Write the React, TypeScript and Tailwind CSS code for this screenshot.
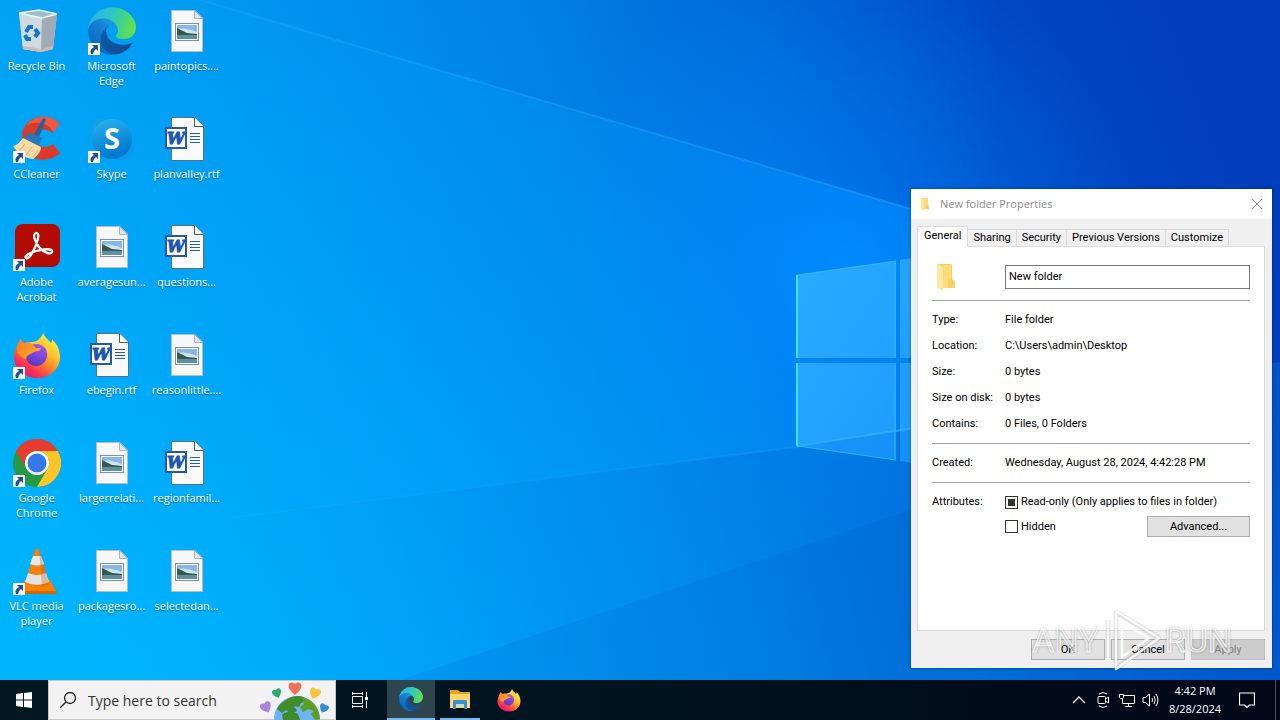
import { ReactNode } from "react";

const Wallpaper = () => {
  return (
    <svg
      className="absolute inset-0 w-full h-full"
      viewBox="0 0 1280 680"
      preserveAspectRatio="none"
      aria-hidden="true"
    >
      <defs>
        <linearGradient id="sky" x1="0" y1="0.6" x2="1" y2="0.4">
          <stop offset="0" stopColor="#00b6ff" />
          <stop offset="0.25" stopColor="#00a8fc" />
          <stop offset="0.5" stopColor="#0092f0" />
          <stop offset="0.68" stopColor="#0076e2" />
          <stop offset="0.85" stopColor="#004fce" />
          <stop offset="1" stopColor="#023cba" />
        </linearGradient>
        <radialGradient id="glow" gradientUnits="userSpaceOnUse" cx="850" cy="260" r="300">
          <stop offset="0" stopColor="#008aff" stopOpacity="0.95" />
          <stop offset="0.5" stopColor="#008cff" stopOpacity="0.5" />
          <stop offset="1" stopColor="#0090ff" stopOpacity="0" />
        </radialGradient>
        <linearGradient id="shade" x1="0" y1="0" x2="0.3" y2="1">
          <stop offset="0" stopColor="#003cae" stopOpacity="0.12" />
          <stop offset="1" stopColor="#003cae" stopOpacity="0" />
        </linearGradient>
        <linearGradient id="upper" gradientUnits="userSpaceOnUse" x1="200" y1="0" x2="1000" y2="0">
          <stop offset="0" stopColor="#0055c8" stopOpacity="0" />
          <stop offset="0.7" stopColor="#0050c8" stopOpacity="0.22" />
          <stop offset="1" stopColor="#0040bc" stopOpacity="0.45" />
        </linearGradient>
        <linearGradient id="lower" gradientUnits="userSpaceOnUse" x1="200" y1="0" x2="911" y2="0">
          <stop offset="0" stopColor="#0090e8" stopOpacity="0" />
          <stop offset="1" stopColor="#006ad4" stopOpacity="0.5" />
        </linearGradient>
        <linearGradient id="beam" gradientUnits="userSpaceOnUse" x1="200" y1="0" x2="911" y2="0">
          <stop offset="0" stopColor="#35b8ff" stopOpacity="0.2" />
          <stop offset="1" stopColor="#30a8ff" stopOpacity="0.4" />
        </linearGradient>
        <linearGradient id="pane" x1="0" y1="0" x2="1" y2="1">
          <stop offset="0" stopColor="#2aacff" />
          <stop offset="1" stopColor="#1c98ff" />
        </linearGradient>
      </defs>
      <rect width="1280" height="680" fill="url(#sky)" />
      <rect width="1280" height="680" fill="url(#shade)" />
      <rect width="1280" height="680" fill="url(#glow)" />
      <path d="M200 0L911 209L1280 317V0Z" fill="url(#upper)" />
      <path d="M0 545L797 447L1280 362V680H0Z" fill="url(#lower)" />
      <path d="M400 680L911 510L1280 390V680Z" fill="#004cc0" opacity="0.12" />
      <path d="M200 0L911 209" stroke="url(#beam)" strokeWidth="2" fill="none" />
      <path d="M230 518L797 447L911 429" stroke="url(#beam)" strokeWidth="2" opacity="0.6" fill="none" />
      <path d="M797 275L896 261V358H797ZM900 260L940 254V358H900ZM797 363H896V460L797 446ZM900 363H940V467L900 461Z" fill="url(#pane)" />
      <path d="M797 446L940 424V467Z" fill="#0078e4" opacity="0.3" />
      <path d="M797 446L940 424" stroke="#35b4ff" strokeWidth="2" opacity="0.7" />
      <path d="M797 275V358M797 363V446" stroke="#42e0ff" strokeWidth="2" />
      <path d="M797 275L896 261M797 446L896 460M895 262V358M895 363V459" stroke="#43beff" opacity="0.7" fill="none" />
    </svg>
  );
};

const EdgeLogo = ({ className }: { className: string }) => {
  return (
    <svg className={className} viewBox="4 4 257 257" aria-hidden="true">
      <defs>
        <linearGradient id="edgeA" x1="0.1" y1="0.5" x2="1" y2="0.6">
          <stop offset="0" stopColor="#0c59a4" />
          <stop offset="1" stopColor="#114a8b" />
        </linearGradient>
        <linearGradient id="edgeB" x1="0.9" y1="0.2" x2="0.3" y2="0.9">
          <stop offset="0" stopColor="#1b9de2" />
          <stop offset="0.4" stopColor="#1680d8" />
          <stop offset="1" stopColor="#0669bf" />
        </linearGradient>
        <linearGradient id="edgeC" x1="0" y1="0.3" x2="1" y2="0.5">
          <stop offset="0" stopColor="#2fafe0" />
          <stop offset="0.4" stopColor="#2bc3cf" />
          <stop offset="0.75" stopColor="#45d680" />
          <stop offset="1" stopColor="#66e04b" />
        </linearGradient>
      </defs>
      <path fill="url(#edgeA)" d="M235.68 195.46a93.73 93.73 0 0 1-10.54 4.71 101.87 101.87 0 0 1-35.9 6.46c-47.32 0-88.54-32.55-88.54-74.32A31.48 31.48 0 0 1 117.13 105c-42.8 1.8-53.8 46.4-53.8 72.53 0 73.88 68.09 81.37 82.76 81.37 7.91 0 19.84-2.3 27-4.56l1.31-.44A128.34 128.34 0 0 0 241.05 201a4 4 0 0 0-5.37-5.54Z" />
      <path fill="url(#edgeB)" d="M110.34 246.34A79.2 79.2 0 0 1 87.6 225a80.72 80.72 0 0 1 29.53-120c3.12-1.47 8.45-4.13 15.54-4a32.35 32.35 0 0 1 25.69 13 31.88 31.88 0 0 1 6.36 18.66c0-.21 24.46-79.6-80-79.6-43.9 0-80 41.66-80 78.21a130.15 130.15 0 0 0 12.11 56 128 128 0 0 0 156.38 67.11 75.55 75.55 0 0 1-62.78-8Z" />
      <path fill="url(#edgeC)" d="M156.94 153.78c-.81 1.05-3.3 2.5-3.3 5.66 0 2.61 1.7 5.12 4.72 7.23 14.38 10 41.49 8.68 41.56 8.68a59.56 59.56 0 0 0 30.27-8.35A61.38 61.38 0 0 0 260.62 114c.26-22.41-8-37.31-11.34-43.91C228.09 28.76 182.35 4.92 132.62 4.92a128 128 0 0 0-128 126.2c.48-36.54 36.8-66.05 80-66.05 3.5 0 23.46.34 42 10.07 16.34 8.58 24.9 18.94 30.85 29.21 6.18 10.67 7.28 24.15 7.28 29.52s-2.75 13.33-7.81 19.91Z" />
    </svg>
  );
};

const FirefoxLogo = ({ className }: { className: string }) => {
  return (
    <svg className={className} viewBox="0 0 48 48" aria-hidden="true">
      <defs>
        <linearGradient id="ffA" x1="0.85" y1="0.1" x2="0.25" y2="0.95">
          <stop offset="0" stopColor="#fff044" />
          <stop offset="0.35" stopColor="#ffc12e" />
          <stop offset="0.6" stopColor="#ff7a26" />
          <stop offset="0.8" stopColor="#ff3750" />
          <stop offset="1" stopColor="#e41c74" />
        </linearGradient>
        <linearGradient id="ffB" x1="0.7" y1="0" x2="0.3" y2="1">
          <stop offset="0" stopColor="#a555f0" />
          <stop offset="1" stopColor="#5436c0" />
        </linearGradient>
        <linearGradient id="ffC" x1="0" y1="0" x2="1" y2="1">
          <stop offset="0" stopColor="#ff7a1f" />
          <stop offset="1" stopColor="#ffae2e" />
        </linearGradient>
      </defs>
      <path fill="url(#ffA)" d="M30 1c1 5 5 7 8 11 1-1 1-3 1-4 5 5 8 11 8 18 0 12-10 21-23 21S1 38 1 26c0-6 2-9 4-12 0-2 1-4 3-6 0 2 1 3 3 4 3-1 6-1 9-1 2-1 5-1 6-3 2-2 4-4 4-7Z" />
      <path fill="url(#ffB)" d="M16 16c4-4 12-4 16 1 5 7 1 17-8 18-7 0-12-5-11-11Z" />
      <path fill="url(#ffC)" d="M4 16c0-3 2-6 4-8 0 3 2 4 4 4 5-1 8 1 11 5h5c0 4-7 3-9 5s-5 1-6 6c-5-2-9-4-9-12Z" />
    </svg>
  );
};

const RecycleBin = () => {
  return (
    <svg className="w-12 h-12" viewBox="0 0 48 48" aria-hidden="true">
      <path d="M6 6L26 3L44 7L40 42L28 45L10 42Z" fill="#c3cdd6" />
      <path d="M6 6L29 11L28 45L10 42Z" fill="#cfdae2" />
      <path d="M29 11L44 7L40 42L28 45Z" fill="#a1abb5" />
      <path d="M6 6L26 3L44 7L29 11Z" fill="#9dbccb" stroke="#eaf5fb" strokeWidth="1.5" />
      <path d="M10 39L28 42L40 39L40 42L28 45L10 42Z" fill="#d5b8ad" />
      <g fill="none" stroke="#1476c9" strokeWidth="4">
        <path d="M13 25L16 20H20" />
        <path d="M22 22L25 26L22 30" />
        <path d="M18 32H14L12 28" />
      </g>
    </svg>
  );
};

const CCleaner = () => {
  return (
    <svg className="w-12 h-12" viewBox="0 0 48 48" aria-hidden="true">
      <path d="M47 9C36-4 9 0 9 23c0 20 23 29 38 15l-7-9c-8 6-17 3-17-6s10-11 16-5Z" fill="#d93a2a" />
      <path d="M47 9C37-2 20 0 13 11c8-5 22-5 27 6Z" fill="#ee5a40" />
      <path d="M30 3l3 1-8 21-5-3Z" fill="#2a5f9a" />
      <path d="M17 18l12 5-3 8-14-6c0-4 2-7 5-7Z" fill="#2878b7" />
      <path d="M10 23l18 9c0 5-4 9-8 12C12 43 5 39 0 31c4-1 7-4 10-8Z" fill="#f6dba6" />
      <path d="M12 29l-5 6m12-3l-6 8m12-5l-5 7" stroke="#dcb272" fill="none" />
    </svg>
  );
};

const Skype = () => {
  return (
    <svg className="w-12 h-12" viewBox="0 0 48 48" aria-hidden="true">
      <defs>
        <linearGradient id="skA" x1="0" y1="0" x2="0.3" y2="1">
          <stop offset="0" stopColor="#2bb4f0" />
          <stop offset="1" stopColor="#0078d0" />
        </linearGradient>
      </defs>
      <circle cx="15" cy="15" r="12" fill="#159fe5" />
      <circle cx="33" cy="33" r="12" fill="#1097e6" />
      <circle cx="24" cy="24" r="20" fill="url(#skA)" />
      <text x="24" y="34" textAnchor="middle" fill="#fff" fontFamily="Open Sans, sans-serif" fontWeight="700" fontSize="29">
        S
      </text>
    </svg>
  );
};

const Acrobat = () => {
  return (
    <svg className="w-12 h-12" viewBox="0 0 48 48" aria-hidden="true">
      <rect x="2" y="1" width="45" height="43" rx="8" fill="#b30b00" />
      <path
        d="M23 10c-4 1-1 9 3 14 5 6 12 8 13 5 1-4-8-3-16-1-7 2-12 5-10 7 3 2 7-6 10-13 2-6 4-12 0-12Z"
        fill="none"
        stroke="#fff"
        strokeWidth="2.3"
      />
    </svg>
  );
};

const Chrome = () => {
  return (
    <svg className="w-12 h-12" viewBox="0 0 48 48" aria-hidden="true">
      <circle cx="24" cy="24" r="24" fill="#249a47" />
      <path d="M3.2 12A24 24 0 0 1 44.8 12H24A12 12 0 0 0 13.6 30Z" fill="#e83b2d" />
      <path d="M44.8 12A24 24 0 0 1 24 48L34.4 30A12 12 0 0 0 24 12Z" fill="#fcc629" />
      <circle cx="24" cy="24" r="12" fill="#fff" />
      <circle cx="24" cy="24" r="9.5" fill="#3379e8" />
    </svg>
  );
};

const Vlc = () => {
  return (
    <svg className="w-12 h-12" viewBox="0 0 48 48" aria-hidden="true">
      <path d="M12 33h25l7 13H5Z" fill="#f38300" />
      <path d="M5 44h39v3H5Z" fill="#d56500" />
      <path d="M22 3q2-3 4 0l10 34q-12 8-24 0Z" fill="#f57f0a" />
      <path d="M20 9h8l3 8q-7 3-14 0Z" fill="#e8e8e8" />
      <path d="M15 26q9 4 18 0l3 9q-12 6-24 0Z" fill="#e3e3e3" />
      <path d="M26 2l10 35q-3 3-7 3Z" fill="#c85500" opacity="0.3" />
    </svg>
  );
};

const ImageFile = () => {
  return (
    <svg className="w-12 h-12" viewBox="0 0 48 48" aria-hidden="true">
      <path d="M8.500 3.500H32L39.500 11V44.500H8.500Z" fill="#f7f7f7" stroke="#b9bec3" />
      <path d="M31.500 3.500V11.500H39.500Z" fill="#dfe6ec" stroke="#a5b4c0" />
      <rect x="12.500" y="16.500" width="23" height="17" fill="#fff" stroke="#7693aa" />
      <path d="M14 18h20v14H14Z" fill="#87b6e8" />
      <path d="M14 22q8-2 20 3v4H14Z" fill="#cfe4ee" />
      <path d="M14 21l6 3 4 2 10 1v2H14Z" fill="#365a4a" />
      <path d="M14 28h20v4H14Z" fill="#5f8fa5" />
    </svg>
  );
};

const WordFile = () => {
  return (
    <svg className="w-12 h-12" viewBox="0 0 48 48" aria-hidden="true">
      <path d="M8.500 2.500H32L40.500 11V45.500H8.500Z" fill="#fafafa" stroke="#587087" />
      <path d="M31.500 2.500V11.500H40.500" fill="#fff" stroke="#445866" />
      <path d="M27 18.500h10M27 21.500h10M27 24.500h10M27 27.500h10" stroke="#1f5fbb" />
      <rect x="3" y="13" width="20" height="20" fill="#fff" stroke="#2159b5" strokeWidth="2" />
      <text x="13" y="29" textAnchor="middle" fill="#2055b0" stroke="#2055b0" fontFamily="DejaVu Serif, serif" fontStyle="italic" fontWeight="700" fontSize="16">
        W
      </text>
    </svg>
  );
};

const ShortcutArrow = () => {
  return (
    <svg className="absolute left-0 bottom-0 w-3 h-3" viewBox="0 0 12 12" aria-hidden="true">
      <rect width="12" height="12" fill="#f8f8f8" />
      <path d="M4 2h6v6L8 6Q5 8 5 11H3Q1 7 6 4Z" fill="#1f4f91" />
    </svg>
  );
};

type Item = { label: string; icon: ReactNode; shortcut?: boolean };

const items: Item[] = [
  { label: "Recycle Bin", icon: <RecycleBin /> },
  { label: "CCleaner", icon: <CCleaner />, shortcut: true },
  { label: "Adobe Acrobat", icon: <Acrobat />, shortcut: true },
  { label: "Firefox", icon: <FirefoxLogo className="w-12 h-12" />, shortcut: true },
  { label: "Google Chrome", icon: <Chrome />, shortcut: true },
  { label: "VLC media player", icon: <Vlc />, shortcut: true },
  { label: "Microsoft Edge", icon: <EdgeLogo className="w-12 h-12" />, shortcut: true },
  { label: "Skype", icon: <Skype />, shortcut: true },
  { label: "averagesun...", icon: <ImageFile /> },
  { label: "ebegin.rtf", icon: <WordFile /> },
  { label: "largerrelati...", icon: <ImageFile /> },
  { label: "packagesro...", icon: <ImageFile /> },
  { label: "paintopics....", icon: <ImageFile /> },
  { label: "planvalley.rtf", icon: <WordFile /> },
  { label: "questions...", icon: <WordFile /> },
  { label: "reasonlittle....", icon: <ImageFile /> },
  { label: "regionfamil...", icon: <WordFile /> },
  { label: "selectedan...", icon: <ImageFile /> },
];

const DesktopIcons = () => {
  return (
    <div className="relative grid grid-flow-col grid-rows-[repeat(6,108px)] auto-cols-[75px] w-max pt-[7px]">
      {items.map((item) => (
        <button key={item.label} className="flex flex-col items-center justify-start pr-0.5">
          <span className="relative block">
            {item.icon}
            {item.shortcut && <ShortcutArrow />}
          </span>
          <span className="mt-[3px] px-1 text-[11px] leading-[15px] text-white [text-shadow:0_1px_1px_#0007]">
            {item.label}
          </span>
        </button>
      ))}
    </div>
  );
};

const FolderIcon = ({ className }: { className: string }) => {
  return (
    <svg className={className} viewBox="0 0 20 30" aria-hidden="true">
      <path d="M1 2h14q1 0 1 1v14l3 2v7H6Z" fill="#f6d065" />
      <path d="M8 3h7v14l-3 1v8H7Z" fill="#ffdc78" />
      <path d="M1 2l6 3v24l-6-3Z" fill="#ffe9a2" />
    </svg>
  );
};

const tabs = ["General", "Sharing", "Security", "Previous Versions", "Customize"];

const details = [
  ["Type:", "File folder"],
  ["Location:", "C:\\Users\\admin\\Desktop"],
  ["Size:", "0 bytes"],
  ["Size on disk:", "0 bytes"],
  ["Contains:", "0 Files, 0 Folders"],
];

const Row = ({ name, value }: { name: string; value: string }) => {
  return (
    <div className="flex h-[26px] items-center">
      <dt className="w-[73px]">{name}</dt>
      <dd>{value}</dd>
    </div>
  );
};

const Divider = () => <hr className="my-1.5 border-[#a0a0a0]" />;

const checkboxStyle =
  "appearance-none w-[13px] h-[13px] border border-[#333] bg-white indeterminate:bg-[#333] indeterminate:shadow-[inset_0_0_0_2px_white]";

const buttonStyle = "h-[21px] border border-[#adadad] bg-[#e1e1e1]";

const PropertiesDialog = () => {
  return (
    <section
      aria-label="New folder Properties"
      className="absolute right-2 top-[189px] w-[361px] bg-[#f0f0f0] pb-2 text-[11px] leading-[14px] text-black shadow-[0_0_3px_#0006] font-['Roboto','Liberation_Sans',sans-serif]"
    >
      <header className="flex h-[30px] items-center bg-white px-[7px] text-[#8c8c8c]">
        <FolderIcon className="w-[14px] h-[14px]" />
        <h1 className="ml-2 flex-1 font-['Open_Sans',sans-serif]">New folder Properties</h1>
        <button aria-label="Close" className="flex h-4 w-4 items-center justify-center">
          <svg className="w-3 h-3" viewBox="0 0 12 12" aria-hidden="true">
            <path d="M1 1l10 10M11 1L1 11" stroke="#8c8c8c" />
          </svg>
        </button>
      </header>
      <div className="pl-1.5 pr-[7px] pt-[7px]">
        <div role="tablist" className="flex h-5 items-end">
          {tabs.map((tab, i) => (
            <button
              key={tab}
              role="tab"
              aria-selected={i === 0}
              className={
                i === 0
                  ? "relative -mb-px h-[21px] border border-b-0 border-[#dcdcdc] bg-white px-1.5 pb-0.5"
                  : "h-[17px] border border-l-0 border-b-0 border-[#d9d9d9] px-[5px]"
              }
            >
              {tab}
            </button>
          ))}
        </div>
        <div className="min-h-[385px] border border-[#dcdcdc] bg-white px-[14px]">
          <div className="flex items-center pt-[15px] pb-0.5">
            <FolderIcon className="ml-1 w-5 h-[30px]" />
            <input
              aria-label="Folder name"
              defaultValue="New folder"
              className="ml-[49px] h-6 min-w-0 flex-1 border border-[#7a7a7a] bg-white px-[3px] pb-0.5"
            />
          </div>
          <Divider />
          <dl>
            {details.map(([name, value]) => (
              <Row key={name} name={name} value={value} />
            ))}
          </dl>
          <Divider />
          <dl>
            <Row name="Created:" value="Wednesday, August 28, 2024, 4:42:28 PM" />
          </dl>
          <Divider />
          <div className="flex pt-1.5">
            <span className="w-[73px]">Attributes:</span>
            <div className="flex-1">
              <label className="flex items-center gap-[3px]">
                <input
                  type="checkbox"
                  className={checkboxStyle}
                  ref={(el) => {
                    if (el) el.indeterminate = true;
                  }}
                />
                Read-only (Only applies to files in folder)
              </label>
              <div className="flex items-center justify-between pt-[7px]">
                <label className="flex items-center gap-[3px]">
                  <input type="checkbox" className={checkboxStyle} />
                  Hidden
                </label>
                <button className={`${buttonStyle} w-[103px]`}>Advanced...</button>
              </div>
            </div>
          </div>
        </div>
        <div className="mt-2 flex justify-end gap-1.5">
          <button className={`${buttonStyle} w-[74px]`}>OK</button>
          <button className={`${buttonStyle} w-[74px]`}>Cancel</button>
          <button disabled className="h-[21px] w-[74px] border border-[#bfbfbf] bg-[#cccccc] text-[#838383]">
            Apply
          </button>
        </div>
      </div>
    </section>
  );
};

const Watermark = () => {
  return (
    <div className="pointer-events-none absolute bottom-2 right-12 flex items-center gap-1 text-[34px] leading-none text-white/50 [-webkit-text-stroke:1px_#ffffffdd] [text-shadow:0_0_3px_#0006] font-['Roboto','Liberation_Sans',sans-serif]">
      <span>ANY</span>
      <svg className="w-[58px] h-16" viewBox="0 0 58 64" fill="none" aria-hidden="true">
        <g stroke="#888" strokeOpacity="0.25" strokeWidth="5" strokeLinejoin="round">
          <path d="M13 4L56 30L13 60V4Z" />
          <path d="M5 12V50" />
        </g>
        <g stroke="#fff" strokeOpacity="0.85" strokeWidth="2.500" strokeLinejoin="round">
          <path d="M13 3L56 30L13 61V3Z" />
          <path d="M5 11V51M19 15V49L46 30Z" />
        </g>
      </svg>
      <span>RUN</span>
    </div>
  );
};

const heart = "M0 5C-8-1-4-6 0-3C4-6 8-1 0 5Z";

const SearchArt = () => {
  return (
    <svg className="w-20 h-10" viewBox="-2 0 80 40" aria-hidden="true">
      <circle cx="40" cy="39" r="23" fill="#6fb2f5" />
      <path d="M29 20q8-6 18-3l2 4-5 2-2 4-5-1 3 5-6 3-5-4-4 3-5-4q3-6 9-9Z" fill="#3f8c2c" />
      <path d="M45 17q16 4 18 22l-5 1-4-6 3-3-6-2-5 3-3-5 4-3Z" fill="#5d9e1e" />
      <path d="M25 34q9-5 16 0l2 6H26Z" fill="#3f8c2c" />
      <g>
        <path d={heart} transform="translate(9 27) rotate(-25) scale(1.2)" fill="#a884dc" />
        <path d={heart} transform="translate(20 13) rotate(-20)" fill="#2fa970" />
        <path d={heart} transform="translate(38 8) scale(1.4)" fill="#f06f5a" />
        <path d={heart} transform="translate(58 13) rotate(20) scale(1.2)" fill="#f8c33f" />
        <path d={heart} transform="translate(67 28) rotate(25)" fill="#3590d8" />
      </g>
    </svg>
  );
};

const Explorer = () => {
  return (
    <svg className="w-6 h-6" viewBox="0 0 24 24" aria-hidden="true">
      <path d="M2 3h8l2 2h10v4H2Z" fill="#e8a418" />
      <path d="M2 7h20v14H2Z" fill="#ffd76a" />
      <path d="M5 22v-8q0-1 1-1h12q1 0 1 1v8h-3v-5H8v5Z" fill="#3a91d8" />
      <path d="M8 17h8v2H8Z" fill="#b8dcf5" />
    </svg>
  );
};

const Taskbar = () => {
  return (
    <footer className="flex h-10 bg-gradient-to-r from-[#01161f] via-[#01131f] to-[#010717] text-white">
      <button aria-label="Start" className="flex w-12 items-center justify-center">
        <svg className="w-4 h-4" viewBox="0 0 16 16" fill="#fff" aria-hidden="true">
          <path d="M0 2L7 1V7.500H0ZM8 1L16 0V7.500H8ZM0 8.500H7V15L0 14ZM8 8.500H16V16L8 15Z" />
        </svg>
      </button>
      <label className="flex w-72 items-center border border-[#c8c8c8] bg-[#f2f2f2] pl-[11px] text-[#333]">
        <svg className="w-4 h-4" viewBox="0 0 16 16" fill="none" stroke="#222" aria-hidden="true">
          <circle cx="10" cy="6" r="5.500" strokeWidth="1.300" />
          <path d="M6 10L0 16" strokeWidth="1.300" />
        </svg>
        <input
          aria-label="Search"
          placeholder="Type here to search"
          className="ml-3 min-w-0 flex-1 bg-transparent text-[14px] placeholder:text-[#333]"
        />
        <SearchArt />
      </label>
      <div className="flex gap-px">
        <button aria-label="Task View" className="flex w-12 items-center justify-center">
          <svg className="w-4 h-4" viewBox="0 0 16 16" fill="none" stroke="#eee" aria-hidden="true">
            <path d="M0 1.500H11M.5 0V3M10.500 0V3M.5 4.500H10.500V11.500H.5ZM.5 13V16M10.500 13V16M0 14.500H11M14.500 0V5M14.500 9V16" />
            <path d="M13 5H16V8H13Z" fill="#fff" stroke="none" />
          </svg>
        </button>
        <button aria-label="Microsoft Edge" className="ml-0.5 flex w-12 items-center justify-center border-b-2 border-[#76b9ed] bg-[#2f454e]">
          <EdgeLogo className="w-6 h-6" />
        </button>
        <button aria-label="File Explorer" className="flex w-12 items-center justify-center px-1">
          <span className="flex h-full w-full items-center justify-center border-b-2 border-[#76b9ed]">
            <Explorer />
          </span>
        </button>
        <button aria-label="Firefox" className="flex w-12 items-center justify-center">
          <FirefoxLogo className="w-6 h-6" />
        </button>
      </div>
      <div className="ml-auto flex items-center">
        <button aria-label="Show hidden icons" className="flex w-6 justify-center">
          <svg className="w-4 h-4" viewBox="0 0 16 16" fill="none" stroke="#fff" strokeWidth="1.300" aria-hidden="true">
            <path d="M2 11L8 5L14 11" />
          </svg>
        </button>
        <button aria-label="Meet Now" className="flex w-6 justify-center">
          <svg className="w-4 h-4" viewBox="0 0 16 16" fill="none" stroke="#fff" aria-hidden="true">
            <path d="M4 2Q8-1 12 2M4 14Q8 17 12 14" />
            <rect x="3" y="4.500" width="7.500" height="7" rx="1" />
            <path d="M10.500 7L13.500 5V11L10.500 9" />
          </svg>
        </button>
        <button aria-label="Network" className="flex w-6 justify-center">
          <svg className="w-4 h-4" viewBox="0 0 16 16" fill="none" stroke="#fff" aria-hidden="true">
            <path d="M5 3.500H15.500V11.500H3.500V7M9.500 11.500V14.500M6 14.500H13M.5 2.500H4.500V5.500L3.500 6.500H1.500L.5 5.500Z" />
          </svg>
        </button>
        <button aria-label="Volume" className="flex w-6 justify-center">
          <svg className="w-[18px] h-4" viewBox="0 0 18 16" fill="none" stroke="#fff" aria-hidden="true">
            <path d="M1 5.500H3.500L7.500 2V14L3.500 10.500H1ZM10 6Q11 8 10 10M12 4Q14.500 8 12 12M14 2Q18 8 14 14" />
          </svg>
        </button>
        <button className="w-16 whitespace-nowrap text-center text-[11px] leading-[18px]">
          <span className="block">4:42 PM</span>
          <span className="block">8/28/2024</span>
        </button>
        <button aria-label="Notifications" className="flex w-10 justify-center">
          <svg className="w-4 h-4" viewBox="0 0 16 16" fill="none" stroke="#fff" strokeWidth="1.200" aria-hidden="true">
            <path d="M.5 1H15.500V13H10.500L8 15.500L5.500 13H.5Z" />
          </svg>
        </button>
        <button aria-label="Show desktop" className="ml-2 h-full w-[5px] border-l border-[#4a5260]"></button>
      </div>
    </footer>
  );
};

const App = () => {
  return (
    <div className="flex min-h-screen flex-col font-['Open_Sans','Noto_Sans',sans-serif]">
      <main className="relative flex-1">
        <Wallpaper />
        <DesktopIcons />
        <PropertiesDialog />
        <Watermark />
      </main>
      <Taskbar />
    </div>
  );
};

export default App;
